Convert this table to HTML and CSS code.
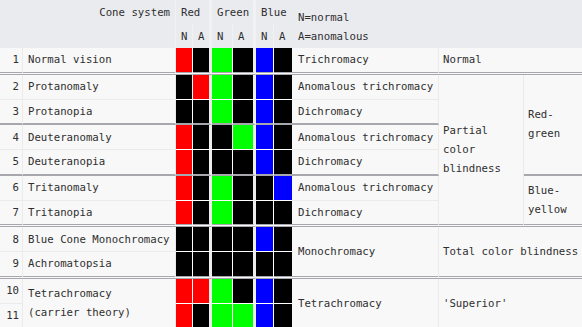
FILE: index.html
```html
<!DOCTYPE html>
<html lang="en">
<head>
<meta charset="utf-8">
<title>Cone systems</title>
<link rel="stylesheet" href="styles.css">
</head>
<body>
<table class="grid">
  <colgroup>
    <col class="c-num"><col class="c-name">
    <col class="c-rn"><col class="c-ra"><col class="c-gn"><col class="c-ga"><col class="c-bn"><col class="c-ba">
    <col class="c-type"><col class="c-class"><col class="c-axis">
  </colgroup>
  <thead>
    <tr>
      <th colspan="2" class="h-cone">Cone system</th>
      <th colspan="2" class="h-grp">Red</th>
      <th colspan="2" class="h-grp">Green</th>
      <th colspan="2" class="h-grp h-last">Blue</th>
      <th colspan="3" rowspan="2" class="h-key">N=normal<br>A=anomalous</th>
    </tr>
    <tr>
      <th colspan="2" class="h-cone"></th>
      <th class="h-n">N</th><th class="h-a">A</th>
      <th class="h-n">N</th><th class="h-a">A</th>
      <th class="h-n">N</th><th class="h-a h-last">A</th>
    </tr>
  </thead>
  <tbody>
    <tr class="dbl">
      <td class="num">1</td><td class="name">Normal vision</td>
      <td class="sw n r"></td><td class="sw a k"></td><td class="sw n g"></td><td class="sw a k"></td><td class="sw n b"></td><td class="sw z k"></td>
      <td class="type">Trichromacy</td><td colspan="2" class="cls">Normal</td>
    </tr>
    <tr>
      <td class="num">2</td><td class="name">Protanomaly</td>
      <td class="sw n k"></td><td class="sw a r"></td><td class="sw n g"></td><td class="sw a k"></td><td class="sw n b"></td><td class="sw z k"></td>
      <td class="type">Anomalous trichromacy</td>
      <td rowspan="6" class="cls wrap bd">Partial color blindness</td>
      <td rowspan="4" class="axis wrap bt">Red-green</td>
    </tr>
    <tr class="thick">
      <td class="num">3</td><td class="name">Protanopia</td>
      <td class="sw n k"></td><td class="sw a k"></td><td class="sw n g"></td><td class="sw a k"></td><td class="sw n b"></td><td class="sw z k"></td>
      <td class="type">Dichromacy</td>
    </tr>
    <tr>
      <td class="num">4</td><td class="name">Deuteranomaly</td>
      <td class="sw n r"></td><td class="sw a k"></td><td class="sw n k"></td><td class="sw a g"></td><td class="sw n b"></td><td class="sw z k"></td>
      <td class="type">Anomalous trichromacy</td>
    </tr>
    <tr class="thick">
      <td class="num">5</td><td class="name">Deuteranopia</td>
      <td class="sw n r"></td><td class="sw a k"></td><td class="sw n k"></td><td class="sw a k"></td><td class="sw n b"></td><td class="sw z k"></td>
      <td class="type">Dichromacy</td>
    </tr>
    <tr>
      <td class="num">6</td><td class="name">Tritanomaly</td>
      <td class="sw n r"></td><td class="sw a k"></td><td class="sw n g"></td><td class="sw a k"></td><td class="sw n k"></td><td class="sw z b"></td>
      <td class="type">Anomalous trichromacy</td>
      <td rowspan="2" class="axis wrap bd">Blue-yellow</td>
    </tr>
    <tr class="dbl">
      <td class="num">7</td><td class="name">Tritanopia</td>
      <td class="sw n r"></td><td class="sw a k"></td><td class="sw n g"></td><td class="sw a k"></td><td class="sw n k"></td><td class="sw z k"></td>
      <td class="type">Dichromacy</td>
    </tr>
    <tr>
      <td class="num">8</td><td class="name">Blue Cone Monochromacy</td>
      <td class="sw n k"></td><td class="sw a k"></td><td class="sw n k"></td><td class="sw a k"></td><td class="sw n b"></td><td class="sw z k"></td>
      <td rowspan="2" class="type bd">Monochromacy</td>
      <td rowspan="2" colspan="2" class="cls nowrap bd">Total color blindness</td>
    </tr>
    <tr class="dbl">
      <td class="num">9</td><td class="name">Achromatopsia</td>
      <td class="sw n k"></td><td class="sw a k"></td><td class="sw n k"></td><td class="sw a k"></td><td class="sw n k"></td><td class="sw z k"></td>
    </tr>
    <tr>
      <td class="num">10</td><td rowspan="2" class="name">Tetrachromacy<br>(carrier theory)</td>
      <td class="sw n r"></td><td class="sw a r"></td><td class="sw n g"></td><td class="sw a k"></td><td class="sw n b"></td><td class="sw z k"></td>
      <td rowspan="2" class="type">Tetrachromacy</td>
      <td rowspan="2" colspan="2" class="cls">'Superior'</td>
    </tr>
    <tr>
      <td class="num">11</td>
      <td class="sw n r"></td><td class="sw a k"></td><td class="sw n g"></td><td class="sw a g"></td><td class="sw n b"></td><td class="sw z k"></td>
    </tr>
  </tbody>
</table>
</body>
</html>
```
FILE: styles.css
```css
:root {
  --bg: #f8f8f8;
  --head: #eaebef;
  --line: #ebebeb;
  --rule: #a7a8ad;
  --gap: #ededee;
  --hline: #f2f2f4;
}

html, body {
  margin: 0;
  overflow: hidden;
  background: var(--bg);
}

body {
  font-family: "DejaVu Sans Mono", monospace;
  font-size: 10.7px;
  line-height: 19px;
  color: #2f2f2f;
}

.grid {
  border-collapse: separate;
  border-spacing: 0;
  table-layout: fixed;
  width: 590px;
}

.c-num { width: 23px; }
.c-name { width: 153px; }
.c-rn { width: 17px; }
.c-ra { width: 19px; }
.c-gn { width: 21px; }
.c-ga { width: 23px; }
.c-bn { width: 18px; }
.c-ba { width: 18px; }
.c-type { width: 147px; }
.c-class { width: 85px; }
.c-axis { width: 66px; }

th, td {
  padding: 0 0 0 5px;
  text-align: left;
  font-weight: normal;
  vertical-align: middle;
  white-space: nowrap;
}

th {
  background: var(--head);
  height: 24px;
}

th.h-cone {
  text-align: right;
  padding: 0 5px 0 0;
  border-right: 1px solid var(--hline);
}

th.h-grp, th.h-a {
  border-right: 3px solid var(--hline);
}

th.h-n {
  border-right: 1px solid var(--hline);
}

th.h-last {
  border-right: 0;
}

th.h-key {
  padding: 6px 0 0 6px;
}

td {
  height: 23.75px;
  border-bottom: 1px solid var(--line);
}

td.num {
  text-align: right;
  padding: 0 3px 0 0;
  border-right: 1px solid var(--line);
}

td.name {
  border-right: 1px solid var(--line);
}

td.type {
  padding-left: 6px;
  border-right: 1px solid var(--line);
}

td.cls {
  padding-left: 4px;
  border-right: 1px solid var(--line);
}

td.axis {
  padding: 0 8px 0 4px;
}

td.wrap {
  white-space: normal;
}

td.sw {
  padding: 0;
  background-clip: padding-box;
  border-bottom: 1px solid #fff;
}

td.sw.n { border-right: 1px solid #fff; }
td.sw.a { border-right: 3px solid var(--gap); }

td.r { background-color: #ff0000; }
td.g { background-color: #00ff00; }
td.b { background-color: #0000ff; }
td.k { background-color: #000000; }

tr.dbl > td, td.bd {
  border-bottom: 3px double var(--rule);
}

tr.thick > td, td.bt {
  border-bottom: 2px solid var(--rule);
}
```
